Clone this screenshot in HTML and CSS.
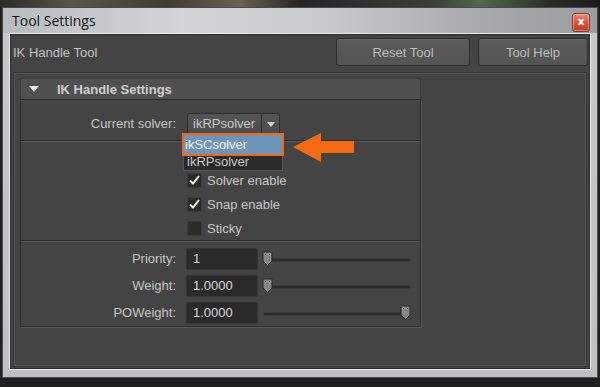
FILE: index.html
```html
<!DOCTYPE html>
<html lang="en">
<head>
  <meta charset="UTF-8" />
  <title>Tool Settings</title>
  <link rel="stylesheet" href="styles.css">
</head>
<body>
  <div class="desk"></div>
  <div class="window">
    <div class="titlebar">
      <span class="title">Tool Settings</span>
      <span class="close">x</span>
    </div>
    <div class="content">
      <div class="toolbar">
        <span class="tool-name">IK Handle Tool</span>
        <button class="btn btn-reset">Reset Tool</button>
        <button class="btn btn-help">Tool Help</button>
      </div>
      <div class="scroll">
        <div class="frame">
          <div class="frame-head"><span class="tri"></span>IK Handle Settings</div>
          <div class="frame-body">
            <div class="solver-row">
              <span class="lbl">Current solver:</span>
              <div class="dropdown">
                <span class="dd-value">ikRPsolver</span>
                <span class="dd-btn"><span class="dd-arrow"></span></span>
                <div class="popup">
                  <div class="popup-item selected">ikSCsolver</div>
                  <div class="popup-item">ikRPsolver</div>
                </div>
              </div>
            </div>
            <div class="sep"></div>
            <div class="checks">
              <div class="check-row">
                <span class="box"><svg width="13" height="12" viewBox="0 0 13 12"><path d="M2 6.5 L5 9.5 L11 2" fill="none" stroke="#f2f2f2" stroke-width="2"/></svg></span>
                <span>Solver enable</span>
              </div>
              <div class="check-row">
                <span class="box"><svg width="13" height="12" viewBox="0 0 13 12"><path d="M2 6.5 L5 9.5 L11 2" fill="none" stroke="#f2f2f2" stroke-width="2"/></svg></span>
                <span>Snap enable</span>
              </div>
              <div class="check-row">
                <span class="box"></span>
                <span>Sticky</span>
              </div>
            </div>
            <div class="sep"></div>
            <div class="sliders">
              <div class="slider-row">
                <span class="lbl">Priority:</span>
                <span class="field">1</span>
                <div class="slider"><span class="track"></span><svg class="thumb at-min" width="11" height="16" viewBox="0 0 11 16"><path d="M1 1.5 Q1 1 1.5 1 H9.5 Q10 1 10 1.5 V10 L5.5 14.5 L1 10 Z" fill="#858585" stroke="#262626"/><rect x="3" y="3" width="1" height="1" fill="#333"/><rect x="7" y="3" width="1" height="1" fill="#333"/></svg></div>
              </div>
              <div class="slider-row">
                <span class="lbl">Weight:</span>
                <span class="field">1.0000</span>
                <div class="slider"><span class="track"></span><svg class="thumb at-min" width="11" height="16" viewBox="0 0 11 16"><path d="M1 1.5 Q1 1 1.5 1 H9.5 Q10 1 10 1.5 V10 L5.5 14.5 L1 10 Z" fill="#858585" stroke="#262626"/><rect x="3" y="3" width="1" height="1" fill="#333"/><rect x="7" y="3" width="1" height="1" fill="#333"/></svg></div>
              </div>
              <div class="slider-row">
                <span class="lbl">POWeight:</span>
                <span class="field">1.0000</span>
                <div class="slider"><span class="track"></span><svg class="thumb at-max" width="11" height="16" viewBox="0 0 11 16"><path d="M1 1.5 Q1 1 1.5 1 H9.5 Q10 1 10 1.5 V10 L5.5 14.5 L1 10 Z" fill="#858585" stroke="#262626"/><rect x="3" y="3" width="1" height="1" fill="#333"/><rect x="7" y="3" width="1" height="1" fill="#333"/></svg></div>
              </div>
            </div>
            <!-- annotation arrow pointing at the highlighted item -->
            <svg class="pointer" width="70" height="36" viewBox="0 0 70 36">
              <polygon points="3,17 31,3 31,11 64,11 64,23 31,23 31,32" fill="#f26a12"/>
            </svg>
          </div>
        </div>
      </div>
    </div>
  </div>
</body>
</html>
```

FILE: styles.css
```css
* {
  margin: 0;
  padding: 0;
  box-sizing: border-box;
}

body {
  background: #202020;
  width: 600px;
  height: 387px;
  overflow: hidden;
  font-family: "Liberation Sans", Arial, sans-serif;
  font-size: 13px;
  color: #c6c6c6;
}

.desk {
  height: 7px;
  background: linear-gradient(to right, #2a2a26, #5c5648 12%, #403b32 28%, #6a6252 40%, #252525 50%, #3a3d3a 72%, #4f6a4a 80%, #2a2a2a 92%, #1a1a1a);
}

.window {
  margin-left: 2px;
  width: 596px;
  height: 371px;
  border: 1px solid #4a4a4a;
  background: linear-gradient(to bottom, #c6c8ca, #bdbfc1);
  padding: 0 6px 7px 6px;
  display: flex;
  flex-direction: column;
}

.titlebar {
  height: 25px;
  display: flex;
  align-items: flex-start;
  margin: 0 -6px;
  padding: 0 7px 0 9px;
  background: linear-gradient(to right, #b9bcbf, #d2d4d6 30%, #c8c9ca 55%, #a9aaab 80%, #9c9d9e);
}

.title {
  flex: 1;
  font-family: "Open Sans", "Noto Sans", sans-serif;
  font-size: 14px;
  color: #151515;
  line-height: 24px;
  padding-top: 1px;
}

.close {
  margin-top: 5px;
  width: 18px;
  height: 19px;
  border: 1px solid #7a3a30;
  border-radius: 3px;
  background: linear-gradient(to bottom, #ee8a78, #d9503a 50%, #c23a22);
  box-shadow: inset 0 0 0 1px rgba(255, 255, 255, 0.35);
  color: #fff;
  font-family: "DejaVu Sans", sans-serif;
  font-weight: bold;
  font-size: 11px;
  line-height: 16px;
  text-align: center;
}

.content {
  flex: 1;
  border: 1px solid #eeeeee;
  background: #444444;
  box-shadow: inset 0 0 0 1px #2c2c2c;
  display: flex;
  flex-direction: column;
}

.toolbar {
  display: flex;
  align-items: center;
  gap: 8px;
  padding: 4px 2px 0 3px;
}

.tool-name {
  flex: 1;
  color: #c2c2c2;
}

.btn {
  height: 28px;
  background: linear-gradient(to bottom, #5a5a5a, #545454);
  border: 1px solid #2e2e2e;
  border-radius: 3px;
  box-shadow: inset 0 1px 0 #666;
  color: #bdbdbd;
  font-family: "Liberation Sans", Arial, sans-serif;
  font-size: 13px;
}

.btn-reset {
  width: 134px;
}

.btn-help {
  width: 110px;
}

.scroll {
  flex: 1;
  margin: 7px 4px 3px 4px;
  border: 1px solid #575757;
  box-shadow: 0 0 0 1px #363636;
  padding: 4px 0 0 5px;
}

.frame {
  width: 401px;
}

.frame-head {
  height: 22px;
  background: #505050;
  border: 1px solid #3a3a3a;
  border-bottom-color: #2c2c2c;
  border-radius: 2px 2px 0 0;
  display: flex;
  align-items: center;
  padding-left: 8px;
  font-weight: bold;
  color: #cfcfcf;
}

.tri {
  width: 0;
  height: 0;
  border-left: 5px solid transparent;
  border-right: 5px solid transparent;
  border-top: 6px solid #e8e8e8;
  margin-right: 18px;
}

.frame-body {
  position: relative;
  border: 1px solid #2e2e2e;
  border-top: none;
  box-shadow: 1px 1px 0 #585858;
}

.solver-row {
  height: 40px;
  display: flex;
  align-items: flex-start;
  padding-top: 13px;
}

.lbl {
  width: 155px;
  text-align: right;
  line-height: 22px;
  color: #c4c4c4;
}

.dropdown {
  position: relative;
  margin-left: 11px;
  width: 93px;
  height: 22px;
  display: flex;
  border: 1px solid #2e2e2e;
  border-radius: 3px;
  background: linear-gradient(to bottom, #555, #4c4c4c);
}

.dd-value {
  flex: 1;
  padding-left: 5px;
  line-height: 20px;
  color: #c8c8c8;
}

.dd-btn {
  width: 18px;
  border-left: 1px solid #2e2e2e;
  display: flex;
  align-items: center;
  justify-content: center;
}

.dd-arrow {
  width: 0;
  height: 0;
  border-left: 4px solid transparent;
  border-right: 4px solid transparent;
  border-top: 5px solid #d6d6d6;
}

.popup {
  position: absolute;
  left: -5px;
  top: 20px;
  width: 100px;
  height: 37px;
  background: #2a2a2a;
  border: 1px solid #575757;
  z-index: 2;
}

.popup-item {
  height: 16px;
  line-height: 16px;
  padding-left: 3px;
  color: #c8c8c8;
}

.popup-item.selected {
  height: 19px;
  line-height: 19px;
  padding-left: 1px;
  background: #6f94ba;
  color: #f4f4f4;
  box-shadow: 0 0 0 2px #f06a14;
}

.sep {
  border-top: 1px solid #2e2e2e;
  border-bottom: 1px solid #555;
}

.checks {
  height: 98px;
  padding: 26px 0 0 166px;
}

.check-row {
  height: 24px;
  display: flex;
  align-items: center;
  gap: 5px;
  color: #c6c6c6;
}

.box {
  width: 15px;
  height: 15px;
  background: #2b2b2b;
  border: 1px solid #3a3a3a;
  border-radius: 2px;
  display: flex;
  align-items: center;
  justify-content: center;
}

.sliders {
  padding-top: 3px;
}

.slider-row {
  height: 27px;
  display: flex;
  align-items: center;
}

.field {
  margin-left: 10px;
  width: 72px;
  height: 22px;
  line-height: 22px;
  padding-left: 7px;
  background: #2a2a2a;
  border-radius: 3px;
  box-shadow: inset 0 0 0 1px #353535;
  color: #d8d8d8;
}

.slider {
  position: relative;
  margin-left: 4px;
  width: 149px;
  height: 22px;
}

.track {
  position: absolute;
  left: 1px;
  right: 0;
  top: 10px;
  height: 4px;
  background: #2c2c2c;
  border: 1px solid #3b3b3b;
  border-radius: 2px;
}

.thumb {
  position: absolute;
  top: 3px;
}

.thumb.at-min {
  left: 0;
}

.thumb.at-max {
  right: 0;
}

.pointer {
  position: absolute;
  left: 269px;
  top: 30px;
}
```
